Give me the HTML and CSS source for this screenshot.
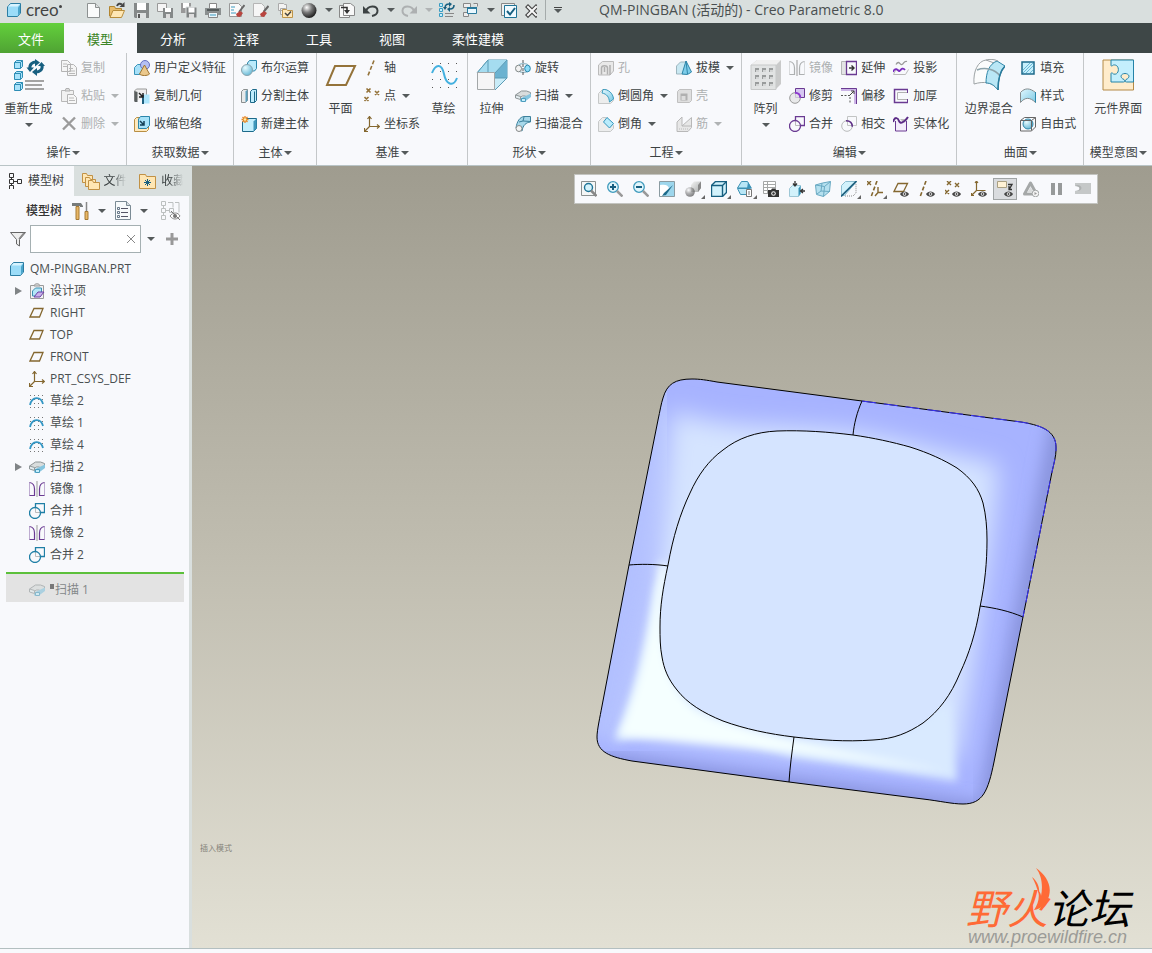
FILE: index.html
```
<!DOCTYPE html>
<html lang="zh-CN">
<head>
    <meta charset="utf-8">
    <title>QM-PINGBAN (活动的) - Creo Parametric 8.0</title>
    <link rel="stylesheet" href="styles.css">
</head>
<body>
    <!-- 图标 -->
    <svg class="sprite" aria-hidden="true">
        <defs>
            <linearGradient id="g-blue" x1="0" y1="0" x2="1" y2="1"><stop offset="0" stop-color="#e2f8ff"/><stop offset="1" stop-color="#7cc9e4"/></linearGradient>
            <linearGradient id="g-gray" x1="0" y1="0" x2="1" y2="1"><stop offset="0" stop-color="#f4f4f4"/><stop offset="1" stop-color="#a9acac"/></linearGradient>
            <radialGradient id="g-ball" cx=".35" cy=".3" r=".7"><stop offset="0" stop-color="#fff"/><stop offset=".5" stop-color="#777"/><stop offset="1" stop-color="#222"/></radialGradient>
            <radialGradient id="g-bball" cx=".35" cy=".3" r=".8"><stop offset="0" stop-color="#e8fbff"/><stop offset="1" stop-color="#5bb3d3"/></radialGradient>
        </defs>
        <symbol id="i-cube" viewBox="0 0 16 16"><path d="M1.500 5l3-3.500h10v9.500l-3 3.500h-10z" fill="#9bdcf8" stroke="#2c7da3"/><path d="M2 4.500l3-2.500h9l-2.500 2.500z" fill="#d8f4ff"/><path d="M12 5.500l2-2.500v8l-2 2.500z" fill="#4aa5cb"/></symbol>
        <symbol id="i-new" viewBox="0 0 16 16"><path d="M2.500 1.500h8l4 4v10h-12z" fill="#fafbfb" stroke="#8d9191"/><path d="M10.500 1.500v4h4" fill="#dde0e0" stroke="#8d9191"/></symbol>
        <symbol id="i-open" viewBox="0 0 16 16"><path d="M.5 14V4.500h5l1 2h6V14z" fill="#e7bb6b" stroke="#b2852f"/><path d="M1 15.500l3-7h11.500l-3 7z" fill="#ffe7b5" stroke="#b88d3c"/><path d="M8 4c1-2.500 3-3 5-1.500" fill="none" stroke="#444" stroke-width="2"/><path d="M15.500 0v5h-5z" fill="#444"/></symbol>
        <symbol id="i-save" viewBox="0 0 16 16"><path d="M1 1h15v15H2l-1-1z" fill="#858989"/><path d="M4 1h9v7H4z" fill="#fff"/><path d="M4 11h9v5H4z" fill="#dfe2e2"/><path d="M5 12h2v4H5z" fill="#555"/></symbol>
        <symbol id="i-saveas" viewBox="0 0 16 16"><path d="M.5 1.500h9v8h-9z" fill="#f5f5f5" stroke="#999"/><path d="M6 6h10v10H6z" fill="#858989"/><path d="M8 6h6v4H8z" fill="#fff"/><path d="M9 12h4v4H9z" fill="#ddd"/></symbol>
        <symbol id="i-savecopy" viewBox="0 0 16 16"><path d="M0 1h10v10H0z" fill="#999"/><path d="M2 1h6v5H2z" fill="#fff"/><path d="M5 5h11v11H5z" fill="#808484" stroke="#dce0e0"/><path d="M7.500 5.500h6v5h-6z" fill="#fff"/><path d="M8 12h5v4H8z" fill="#ddd"/></symbol>
        <symbol id="i-print" viewBox="0 0 16 16"><path d="M4.500 1.500h7v6h-7z" fill="#fff" stroke="#888"/><path d="M0 6h16v7H0z" fill="#8b9090"/><path d="M2 7h12v2H2z" fill="#555b5b"/><path d="M3.500 10.500h9v5h-9z" fill="#eaf6fb" stroke="#888"/><path d="M5 13h6" stroke="#3d9bc0"/></symbol>
        <symbol id="i-docpen" viewBox="0 0 16 16"><path d="M.5 1.500h9l3 3v10h-12z" fill="#fafafa" stroke="#999"/><path d="M2 5h4M2 8h3M2 11h5" stroke="#3d9bc0"/><path d="M15.500 3L10 10" stroke="#666" stroke-width="2"/><path d="M11 9l-4 3 1 2.500 3 .5 3-4z" fill="#b8453f"/></symbol>
        <symbol id="i-docerase" viewBox="0 0 16 16"><path d="M.5 1.500h8l3 3v10h-11z" fill="#f6f6f6" stroke="#b5b5b5"/><path d="M15.500 4l-5 6" stroke="#666" stroke-width="2"/><path d="M11 9l-4 3 1 2.500 3 .5 3-4z" fill="#b8453f"/></symbol>
        <symbol id="i-docfolder" viewBox="0 0 16 16"><path d="M1.500 1.500h5l1 1h2v6h-8zM3.500 6.500h5v6h-5z" fill="#f3f3f3" stroke="#aaa"/><path d="M5.500 15.500v-8h4l1 1h5v7z" fill="#ffe8b9" stroke="#bd944a"/><path d="M8 11l2.500 2.500L14 9.500" fill="none" stroke="#444" stroke-width="1.500"/></symbol>
        <symbol id="i-sphere" viewBox="0 0 16 16"><circle cx="8" cy="8.500" r="7.500" fill="url(#g-ball)"/></symbol>
        <symbol id="i-docin" viewBox="0 0 16 16"><path d="M.5 3.500h10v12H.500z" fill="#f8f8f8" stroke="#888"/><path d="M4.500 1.500h7l4 3v9h-11z" fill="#f8f8f8" stroke="#888"/><path d="M2 5.500h6v3" fill="none" stroke="#333" stroke-width="1.600"/><path d="M5 8h6l-3 4z" fill="#333"/></symbol>
        <symbol id="i-undo" viewBox="0 0 16 16"><path d="M3 9c2-6 11-6 11.500-.5.300 3-2.500 5-5.500 5.500" fill="none" stroke="currentColor" stroke-width="2"/><path d="M0 4v7.500h7.500z" fill="currentColor"/></symbol>
        <symbol id="i-regen" viewBox="0 0 16 16"><path d="M.5 1.500h3v3h-3zM.5 6.500h3v3h-3zM.5 11.500h3v3h-3z" fill="#c5eefc" stroke="#3a9cc2"/><path d="M6 11.500h9M6 14.500h8" stroke="#888"/><path d="M6 6c0-4 3-4 4-4M15 3c0 4-3 4-4 4" fill="none" stroke="#175f80" stroke-width="1.600"/><path d="M10 0l3 2-3 3zM11 5v5L8 7zM4 5h4L6 8z" fill="#175f80"/></symbol>
        <symbol id="i-windows" viewBox="0 0 16 16"><path d="M.5 1.500h7v4h-7zM.5 10.500h5v4h-5zM10.500 1.500h4v3" fill="#eee" stroke="#888"/><path d="M4.500 5.500h9v6h-9z" fill="#e9f8ff" stroke="#2a7a9c"/><path d="M4 5h10v2H4z" fill="#2a7a9c"/></symbol>
        <symbol id="i-checkwin" viewBox="0 0 16 16"><path d="M.5 1.500h13v12H.500z" fill="#eef0f0" stroke="#888"/><path d="M3.500 3.500h12v12h-12z" fill="#f0faff" stroke="#1f7396"/><path d="M6 9l3 3.500L14 6" fill="none" stroke="#175f80" stroke-width="2"/></symbol>
        <symbol id="i-close" viewBox="0 0 12 16"><path d="M3 5l8 8M11 5l-8 8" stroke="#444" stroke-width="4.400" stroke-linecap="square"/><path d="M3 5l8 8M11 5l-8 8" stroke="#f8f9f9" stroke-width="2" stroke-linecap="square"/></symbol>

        <symbol id="i-regen-big" viewBox="0 0 32 32"><g stroke="#2d8db5"><path d="M1.500 3.500l2-2h6v6l-2 2h-6zM1.500 14.500l2-2h6v6l-2 2h-6zM1.500 25.500l2-2h6v6l-2 2h-6z" fill="#a9e3fb"/><path d="M1.500 3.500h6v6M1.500 14.500h6v6M1.500 25.500h6v6M7.500 3.500l2-2M7.500 14.500l2-2M7.500 25.500l2-2" fill="none"/></g><path d="M12 22h19M12 26h17M12 30h19" stroke="#a3a3a3" stroke-width="2"/><path d="M17 10c-1-5 3-7 6-7M29 6c1 5-3 7-6 7" fill="none" stroke="#175f80" stroke-width="3"/><path d="M22 0l5 3.500-5 4zM24 9v8l-5-4zM13.500 8.500H21L17 13zM25 7h7l-3.500-4z" fill="#175f80"/></symbol>
        <symbol id="i-copy" viewBox="0 0 16 16"><path d="M.5.500h6l3 3v8h-9zM6.500 4.500h6l3 3v8h-9z" fill="#f5f5f5" stroke="#b4b4b4"/><path d="M2 4h4M2 6.500h4M8 8.500h4M8 11h6M8 13.500h6" stroke="#b9b9b9"/></symbol>
        <symbol id="i-paste" viewBox="0 0 16 16"><path d="M.5 2.500h12v11H.500z" fill="#f1f1f1" stroke="#b8b8b8"/><path d="M4 3l1-2.500h3L9 3z" fill="#ddd" stroke="#b0b0b0"/><path d="M6.500 6.500h6l3 3v6h-9z" fill="#f7f7f7" stroke="#b4b4b4"/><path d="M8 10h5M8 12.500h6" stroke="#b9b9b9"/></symbol>
        <symbol id="i-delete" viewBox="0 0 16 16"><path d="M2 1.500l12 12M14 1.500l-12 12" stroke="#9b9b9b" stroke-width="2.400"/></symbol>
        <symbol id="i-udf" viewBox="0 0 16 16"><path d="M.5 7.500l3-3h6v7l-2 3h-7z" fill="#a6e0f8" stroke="#3a94ba"/><circle cx="11" cy="5" r="4.500" fill="#b5bff2" stroke="#6670c0"/><path d="M10.500 5l5 9c-2 2-8 2-10 0z" fill="#ebc88c" stroke="#9d7431"/></symbol>
        <symbol id="i-copygeo" viewBox="0 0 16 16"><path d="M.5 13V3l2-2h10v8" fill="#ececec" stroke="#999"/><path d="M.5 3v11h3V4z" fill="#5a5f5f"/><path d="M8.500 6.500h7v9h-7z" fill="#aee6fc"/><path d="M8 7h2v9H8z" fill="#1d5f7e"/><path d="M5 5l4 4M9 5v4H5" fill="none" stroke="#222" stroke-width="1.500"/></symbol>
        <symbol id="i-shrink" viewBox="0 0 16 16"><path d="M.5 3.500l2-2h12v12l-2 2H.500z" fill="#ffe9bd" stroke="#b98f43"/><path d="M4.500 3l2-2.500h9v9l-3 3h-8z" fill="#a7e2f8" stroke="#2b86ab"/><path d="M6 5l4 4M10 5v4H6" fill="none" stroke="#123f55" stroke-width="1.500"/></symbol>
        <symbol id="i-bool" viewBox="0 0 16 16"><path d="M6.500 3l2-2.500h7v8l-2 2.500h-7z" fill="#baeafb" stroke="#2b86ab"/><circle cx="6" cy="10" r="5.500" fill="url(#g-bball)" stroke="#8aa3ad"/></symbol>
        <symbol id="i-split" viewBox="0 0 16 16"><path d="M.5 3.500l2-2h4v11l-2 2h-4z" fill="#e8eaea" stroke="#8b8f8f"/><path d="M4.500 3.500l2-2v11l-2 2z" fill="#5c9fbd"/><path d="M9.500 3.500l2-2h4v11l-2 2h-4z" fill="#bfecfc" stroke="#1d6a8a"/><path d="M13.500 3.500v11" stroke="#1d6a8a"/></symbol>
        <symbol id="i-newbody" viewBox="0 0 16 16"><path d="M1.500 5.500l3-3h11v10l-3 3h-11z" fill="#c3effd" stroke="#1d6a8a"/><path d="M12.500 5.500l3-3v10l-3 3z" fill="#3f97bb"/><path d="M4 0v7M.5 3.500h7M1.500 1l5 5M6.500 1l-5 5" stroke="#e88624" stroke-width="1.300"/><circle cx="4" cy="3.500" r="1.300" fill="#fff2a5"/></symbol>
        <symbol id="i-plane-big" viewBox="0 0 32 32"><path d="M10 7h20l-9 19H2z" fill="none" stroke="#94733a" stroke-width="2"/></symbol>
        <symbol id="i-axis" viewBox="0 0 16 16"><path d="M10 .5L4 15.500" stroke="#94733a" stroke-width="1.600" stroke-dasharray="4 2"/></symbol>
        <symbol id="i-points" viewBox="0 0 16 16"><path d="M2.500.500l4 4M6.500.500l-4 4M11 3l4 4M15 3l-4 4M.5 9l4 4M4.500 9l-4 4" stroke="#94733a" stroke-width="1.600"/></symbol>
        <symbol id="i-csys" viewBox="0 0 16 16"><path d="M5.500 11V1M5.500 10.500H15M5.500 10.500L1 15M3.500 3l2-2.500 2 2.500M13 8.500l2.500 2-2.500 2M.5 12v3.500H4" fill="none" stroke="#84672f" stroke-width="1.200"/></symbol>
        <symbol id="i-sketch-big" viewBox="0 0 32 32"><g stroke="#555" stroke-dasharray="1 7"><path d="M4 4.500h26M4 12.500h26M4 20.500h26M4 28.500h26"/></g><path d="M4 14C8 4 14 5 16 15s9 14 13 4" fill="none" stroke="#43b0df" stroke-width="2"/></symbol>
        <symbol id="i-extrude-big" viewBox="0 0 32 32"><path d="M1 14L12 1h19v18L19 31" fill="#c9ecf8" stroke="#5b9bb5"/><path d="M12 1h19L19 14H1z" fill="#a5dcf0"/><path d="M31 1v18H19z" fill="#5fadd0"/><path d="M19 14L31 1v18H19z" fill="#6bb2d0"/><path d="M12 1v12M19 19h12M12 1L1 14M31 1L19 14" fill="none" stroke="#5b9bb5"/><path d="M1.500 13.500h17v17h-17z" fill="#f5f5f6" stroke="#a3a7a8"/></symbol>
        <symbol id="i-revolve" viewBox="0 0 16 16"><path d="M4 5c2-2 7-2 9 0M4 11c2 2 7 2 9 0" fill="none" stroke="#9fc0cd" stroke-width="1.500"/><path d="M8 0v16" stroke="#555" stroke-dasharray="3 1"/><ellipse cx="3.500" cy="8.500" rx="3" ry="3.300" fill="#f1f1f1" stroke="#7f8686"/><ellipse cx="12.500" cy="8.500" rx="2.800" ry="3.300" fill="#8edcf8" stroke="#2385ac"/></symbol>
        <symbol id="i-sweep" viewBox="0 0 16 16"><path d="M.5 7l6-4h5l4 1.500v4l-5 1V8h-3l-3 2-4-1z" fill="#d9dddd" stroke="#8c9496"/><path d="M5 10.500l11-5v3.500l-6 4.500H5z" fill="#86c5df"/><path d="M.5 7l5 1.500v3l-5-1.500z" fill="#e4edf0" stroke="#8f9799"/><path d="M6.500 10.500h4v3h-4z" fill="#c6eefb" stroke="#4c9dbe"/></symbol>
        <symbol id="i-sweepblend" viewBox="0 0 16 16"><path d="M1 12C2 5 5 1 9 .5h6.500V6C11 6.500 8 9 7 15z" fill="#a7d8ea" stroke="#3d819c"/><path d="M9 1L8 5l7.500.5M4 6l4-1" stroke="#3d819c" fill="none"/><circle cx="4" cy="12.500" r="3" fill="#f3f3f3" stroke="#858989"/></symbol>
        <symbol id="i-hole" viewBox="0 0 16 16"><path d="M.5 5l4-3.500h11v9.500L12 15H.500z" fill="#e9e9e9" stroke="#bbb"/><path d="M3.500 14.500V8c0-3 6-3 6 0v6.500M6.500 12V7M12 5v10" fill="none" stroke="#b0b0b0" stroke-width="1.500"/></symbol>
        <symbol id="i-round" viewBox="0 0 16 16"><path d="M.5 5.500l4-4h4l7 8v3l-3 3H.500z" fill="#eceded" stroke="#c6c8c8"/><path d="M5 1.500C10 1 15 5 15.500 11l-4 3C11 9 9 6 4 5z" fill="url(#g-blue)" stroke="#3c9dc0"/></symbol>
        <symbol id="i-chamfer" viewBox="0 0 16 16"><path d="M.5 5.500l4-4h4l7 8v3l-3 3H.500z" fill="#eceded" stroke="#c6c8c8"/><path d="M5.500 6l3.500-4.500 6.500 6-4 4.500z" fill="#b9ecfc" stroke="#3496bd"/></symbol>
        <symbol id="i-draft" viewBox="0 0 16 16"><path d="M.5 6l4-4h6v12H.500z" fill="#c9e8f2" stroke="#9db6bf"/><path d="M6 14L10 1l5.500 11-4 2.500z" fill="#7dcdea" stroke="#2e86a9"/><path d="M10 1l1.500 13" stroke="#2e86a9"/></symbol>
        <symbol id="i-shell" viewBox="0 0 16 16"><path d="M1.500 3.500l2-2h12v11l-2 2h-12z" fill="#dfdfdf" stroke="#c0c0c0"/><path d="M4.500 5.500h7v7h-7z" fill="#b0b0b0"/><path d="M5.500 8h4v4h-4z" fill="#ddd"/></symbol>
        <symbol id="i-rib" viewBox="0 0 16 16"><path d="M1 6v9.500h11l3.500-4V1.500L6 10V1L1 6zM6 10h9.500" fill="#e7e7e7" stroke="#b8b8b8"/><path d="M3 13h10" stroke="#bbb" stroke-dasharray="1 1"/></symbol>
        <symbol id="i-pattern-big" viewBox="0 0 32 32"><path d="M1 6l6-5h24v24l-6 6H1z" fill="#c9caca"/><path d="M7 1h24l-5 5H1z" fill="#f0f0f0"/><path d="M1 6h25v24.500H1z" fill="#e1e3e3" stroke="#c7c9c9"/><path d="M5 9h4v4H5zM12 9h4v4h-4zM19 9h4v4h-4zM5 16h4v4H5zM12 16h4v4h-4zM19 16h4v4h-4zM5 23h4v4H5zM12 23h4v4h-4zM19 23h4v4h-4z" fill="#999c9c"/><path d="M6 11h3v2H6zM13 11h3v2h-3zM20 11h3v2h-3zM6 18h3v2H6zM13 18h3v2h-3zM20 18h3v2h-3zM6 25h3v2H6zM13 25h3v2h-3zM20 25h3v2h-3z" fill="#d3d5d5"/></symbol>
        <symbol id="i-mirror" viewBox="0 0 16 16"><path d="M.5 1.500C4 2 5.500 4 5.500 8v6.500h-5M15.500 1.500C12 2 10.500 4 10.500 8v6.500h5" fill="none" stroke="currentColor" stroke-width="1.200"/><path d="M.5 1.500v13M15.500 1.500v13" stroke="currentColor" opacity=".4"/><path d="M8 0v16" stroke="#999"/></symbol>
        <symbol id="i-trim" viewBox="0 0 16 16"><path d="M6.500.500h9v9h-9z" fill="#d6c6f1" stroke="#6a3a92"/><circle cx="6" cy="10" r="5.300" fill="#e3e5e5" fill-opacity=".8" stroke="#999"/><path d="M6 4.700c3 0 5.300 2 5.300 5" fill="none" stroke="#8d3bd0" stroke-width="2"/></symbol>
        <symbol id="i-merge" viewBox="0 0 16 16"><path d="M6.500 4V.5h9v9H11" fill="none" stroke="currentColor" stroke-width="1.300"/><path d="M6.500 5v4.500H11" fill="none" stroke="#bbb"/><circle cx="6" cy="10" r="5.500" fill="none" stroke="currentColor" stroke-width="1.300"/></symbol>
        <symbol id="i-extend" viewBox="0 0 16 16"><path d="M.5 1.500h5v13h-5z" fill="#e3e5e5" stroke="#b5b7b7"/><path d="M5.500 1.500h10v13h-10z" fill="none" stroke="#6a3a92" stroke-width="1.300"/><path d="M8 8h5M10.500 5.500L13 8l-2.500 2.500" fill="none" stroke="#333" stroke-width="1.400"/></symbol>
        <symbol id="i-offset" viewBox="0 0 16 16"><path d="M0 0h16v16h-3V3H0z" fill="#cbb4e6"/><path d="M0 .5h15.500V16" fill="none" stroke="#6a3a92"/><path d="M0 7.500h9V16" fill="none" stroke="#555" stroke-dasharray="2 1.500"/><path d="M9 7l4-4M10 3h3v3" fill="none" stroke="#444"/></symbol>
        <symbol id="i-intersect" viewBox="0 0 16 16"><path d="M6.500.500h9v9h-9z" fill="none" stroke="#c2c4c4"/><circle cx="6" cy="10" r="5.300" fill="none" stroke="#b9bbbb"/><path d="M5 4.700c4 0 6.300 2 6.300 6" fill="none" stroke="#5b2a86" stroke-width="1.500"/></symbol>
        <symbol id="i-project" viewBox="0 0 16 16"><path d="M3 4.500c3-5 4 1 6 0s2-4 5-3" fill="none" stroke="#999" stroke-width="1.300"/><path d="M3 9.500L.5 14.500h12l3-5" fill="none" stroke="#bbb"/><path d="M0 12c2-5 5-2 6-1s3-5 6-1" fill="none" stroke="#7b2fbe" stroke-width="1.800"/></symbol>
        <symbol id="i-thicken" viewBox="0 0 16 16"><path d="M15 1.500H1.500v13H15" fill="none" stroke="#6a3a92" stroke-width="1.500"/><path d="M15 4.500H4.500v7H15" fill="none" stroke="#b2b2b2"/><path d="M14.500 1v4M14.500 11v4" stroke="#6a3a92"/></symbol>
        <symbol id="i-solidify" viewBox="0 0 16 16"><path d="M2.500 5v10h11V5" fill="#f3edfa" stroke="#6a3a92"/><path d="M7 3h8l-4 4z" fill="#bbb"/><path d="M0 6c2-6 5-4 6-1s5 2 9-4" fill="none" stroke="#5b2a86" stroke-width="2"/></symbol>
        <symbol id="i-boundary-big" viewBox="0 0 32 32"><path d="M1 25C0 12 5 2 13 1l19 7c-5 5-7 14-7 23-6-8-14-9-24-6z" fill="#fbfcfc" stroke="#9da3a5"/><path d="M24 2l8 5c-5 5-7 14-7 24-4-5-7-7-12-7 0-10 3-19 11-22z" fill="#b9e7f6" stroke="#2f86a8"/><path d="M4 11c8-3 18-1 23 6" fill="none" stroke="#8ca3ab" stroke-width="1.500"/><path d="M13 1c4-1 8-1 12 1" fill="none" stroke="#9da3a5"/><path d="M32 7c-5 5-7 14-7 24" fill="none" stroke="#287c9e" stroke-width="1.500"/></symbol>
        <symbol id="i-fill" viewBox="0 0 16 16"><path d="M2 2h12v12H2z" fill="#c6effc" stroke="#1d6a8a" stroke-width="1.500"/><path d="M3 10l7-7M3 13L13 3M6 13l7-7M10 13l3-3" stroke="#6db9d6"/></symbol>
        <symbol id="i-style" viewBox="0 0 16 16"><path d="M.5 4.500C5-.5 10 0 15.500 4.500v10C10 9 5 9 .5 14.500z" fill="url(#g-blue)" stroke="#858c8e"/><path d="M15.500 4v10.500" stroke="#2a86aa"/></symbol>
        <symbol id="i-freestyle" viewBox="0 0 16 16"><circle cx="8" cy="8" r="5" fill="url(#g-bball)" stroke="#2f86a8"/><path d="M.5 4.500l4-3h11v9.500l-4 4H.500zM.5 4.500h11v10M11.500 4.500l4-3" fill="none" stroke="#666"/></symbol>
        <symbol id="i-component-big" viewBox="0 0 32 32"><path d="M1 1h30.500v30H1z" fill="#ffeccb" stroke="#b48a46"/><path d="M9 1h22.500v22h-7c-2 0-1-1.500-.5-2.500 5-2 3-6-1-6s-6 4-1 6c.5 1 1.500 2.500-.5 2.500H9v-8c0-2 1.500-1 2.500 0 6 2 7-10 0-9-1 .5-2.500 2-2.500 0z" fill="#c4effd" stroke="#2583a8"/></symbol>

        <symbol id="i-tree" viewBox="0 0 16 16"><path d="M2.500.500h4v4h-4zM2.500 6.500h4v4h-4zM2.500 12.500h4v4h-4zM10.500 6.500h4v4h-4z" fill="none" stroke="#333"/><path d="M4.500 4.500v2M4.500 10.500v2M6.500 8.500h4" stroke="#333"/></symbol>
        <symbol id="i-folders" viewBox="0 0 20 20"><g fill="#ffe6b3" stroke="#c19145"><path d="M1.500 11.500v-9h4l1 2h5v7z"/><path d="M4.500 15.500v-9h4l1 2h5v7z"/><path d="M7.500 18.500v-9h4l1 2h6v7z"/></g></symbol>
        <symbol id="i-favor" viewBox="0 0 20 20"><path d="M1.500 17.500v-14h6l1 2h9v12z" fill="#ffe6b3" stroke="#c19145"/><path d="M9.500 8v7M6 11.500h7M7 9l5 5M12 9l-5 5" stroke="#175f80"/></symbol>
        <symbol id="i-hammer" viewBox="0 0 20 20"><path d="M1 2h9l2 3v1H9V5H1z" fill="#777b7b"/><path d="M5 5.500h3v13H5z" fill="#e9b766" stroke="#a57a35"/><path d="M15.500 1v9" stroke="#888" stroke-width="1.500"/><path d="M14 10.500h3v8h-3z" fill="#e9b766" stroke="#a57a35"/></symbol>
        <symbol id="i-list" viewBox="0 0 20 20"><path d="M2.500.500h11l4 4v14h-15z" fill="#f7fafb" stroke="#7b8b95"/><path d="M13.500.500v4h4" fill="#d7dde0" stroke="#7b8b95"/><path d="M8 7.500h7M8 11.500h7M8 15.500h7" stroke="#556"/><path d="M4.500 6.500h2v2h-2zM4.500 10.500h2v2h-2zM4.500 14.500h2v2h-2z" fill="none" stroke="#678"/></symbol>
        <symbol id="i-treehide" viewBox="0 0 20 20"><path d="M.5.500h4v4h-4zM.5 7.500h4v4h-4zM.5 14.500h4v4h-4zM8.500 7.500h4v4h-4zM2.500 4v3M2.500 11v3M4.500 9.500h4M7 1.500h5v5M14 1.500h4v10" fill="none" stroke="#bcc0c0"/><path d="M9 15c3-4 8-4 10 0-3 4-7 4-10 0z" fill="#fff" stroke="#888"/><circle cx="14" cy="15" r="2" fill="#777"/><path d="M10 10l9 9" stroke="#777"/></symbol>
        <symbol id="i-filter" viewBox="0 0 16 16"><path d="M.5 1.500h15l-6 7v6.500l-3-2V8.500z" fill="#eee" stroke="#666"/><path d="M9 8l5-6" stroke="#888" stroke-width="1.500"/></symbol>
        <symbol id="i-design" viewBox="0 0 16 16"><path d="M1.500 2.500h13v13h-13z" fill="#f2f2f4" stroke="#9a9a9a"/><path d="M5 3c0-3 6-3 6 0z" fill="#ddd" stroke="#999"/><path d="M3.500 8l3-3h6v5l-3 3h-6z" fill="#b4e6f7" stroke="#3c91b3"/><path d="M5 14l4-5h6l-4 5z" fill="#c8b2ea" stroke="#6b3fa5"/></symbol>
        <symbol id="i-datum" viewBox="0 0 16 16"><path d="M5 3.500h9L10.500 12H1z" fill="none" stroke="#84672f" stroke-width="1.300"/></symbol>
        <symbol id="i-sketch" viewBox="0 0 16 16"><path d="M1 2.500h14M1 6.500h14M1 10.500h14M1 14.500h14" stroke="#777" stroke-dasharray="1 3"/><path d="M1 12C3 3 12 3 14 11" fill="none" stroke="#3296c4" stroke-width="1.800"/></symbol>

        <symbol id="i-fit" viewBox="0 0 16 16"><path d="M.5.500h14v14H.500z" fill="#f4f6f6" stroke="#8c9191"/><circle cx="7.500" cy="6.500" r="4" fill="#d5f2fb" stroke="#1f7396" stroke-width="1.400"/><path d="M10 9.500l5.500 5.500" stroke="#888" stroke-width="2.500"/></symbol>
        <symbol id="i-zoomin" viewBox="0 0 16 16"><circle cx="6" cy="6" r="5.300" fill="#e2f6fc" stroke="#3f9bbd" stroke-width="1.300"/><path d="M10 10l5.500 5.500" stroke="#999" stroke-width="2.500"/><path d="M3 6h6M6 3v6" stroke="#175f80" stroke-width="2"/></symbol>
        <symbol id="i-zoomout" viewBox="0 0 16 16"><circle cx="6" cy="6" r="5.300" fill="#e2f6fc" stroke="#3f9bbd" stroke-width="1.300"/><path d="M10 10l5.500 5.500" stroke="#999" stroke-width="2.500"/><path d="M3 6h6" stroke="#175f80" stroke-width="2"/></symbol>
        <symbol id="i-repaint" viewBox="0 0 16 16"><path d="M.5.500h15v15H.500z" fill="#9dd6ec" stroke="#8b9ba1"/><path d="M1 4c5-1 8 0 9 3l-5 8H1z" fill="#fff"/><path d="M14 4l-9 8-2 3 4-1z" fill="#1d6a8a"/></symbol>
        <symbol id="i-shading" viewBox="0 0 16 16"><path d="M6 4l3-3.500h7V7l-3 4H6z" fill="url(#g-gray)"/><path d="M13 4v7l3-4V.5z" fill="#888"/><circle cx="5" cy="11" r="4.800" fill="url(#g-ball)" opacity=".55"/></symbol>
        <symbol id="i-display" viewBox="0 0 16 16"><path d="M.5 4.500l4-4h11v11l-4 4H.500z" fill="#d2f2fc" stroke="#175f80" stroke-width="1.400"/><path d="M.5 4.500h11v11M11.500 4.500l4-4" fill="none" stroke="#175f80" stroke-width="1.400"/></symbol>
        <symbol id="i-orient" viewBox="0 0 16 16"><path d="M.5 7L4.500.5h6L14 7zM.5 7.500h12l-3 6h-6z" fill="#b8e6f6" stroke="#3c91b3"/><path d="M11 1l4 6.500h-5z" fill="#3b93b8"/><path d="M9.500 8.500h5v7h-5z" fill="#fff" stroke="#777"/><path d="M11 11h2M11 13h2" stroke="#777"/></symbol>
        <symbol id="i-camera" viewBox="0 0 16 16"><path d="M.5.500h12v12H.500zM.5 3.500h12M.5 6.500h12M.5 9.500h12M4.500.500v12" fill="#fff" stroke="#a5a7a7"/><path d="M5 9h3l1-1.500h3L13 9h3v7H5z" fill="#333"/><circle cx="10.500" cy="12.500" r="2.300" fill="#eee"/><circle cx="10.500" cy="12.500" r="1.200" fill="#333"/></symbol>
        <symbol id="i-normal" viewBox="0 0 16 16"><path d="M.5 7.500l3-3h8v8l-2 3h-9z" fill="#d2f2fc" stroke="#9ec7d6"/><path d="M9.500 7.500l2-3v8l-2 3z" fill="#3694ba"/><path d="M6 0v4M4 2.500l2 2.500 2-2.500M16 10h-4M14 8l-2.500 2 2.500 2" fill="none" stroke="#333" stroke-width="1.300"/></symbol>
        <symbol id="i-persp" viewBox="0 0 16 16"><path d="M.5 4l7-2 8-1.500-1 10-6 5-7-2z" fill="#b5e0ef" stroke="#69a9c2"/><path d="M.5 4l9 1.500 6-5M9.500 5.500l-1 10M7 2L6 10l9 .5M6 10l-4 3" fill="none" stroke="#69a9c2"/></symbol>
        <symbol id="i-section" viewBox="0 0 16 16"><path d="M.5 4.500l4-4h11l-12 14h-3z" fill="#d2f2fc" stroke="#8cbdd0"/><path d="M4 15h8l3-3V3" fill="none" stroke="#888" stroke-dasharray="1 1"/><path d="M0 15.500L15.500 0" stroke="#1d5f7e" stroke-width="1.600"/></symbol>
        <symbol id="i-datums" viewBox="0 0 16 16"><path d="M0 0l4 4M4 0L0 4M11 6v6M8 15l3-3.500h5" stroke="#84672f" stroke-width="1.400" fill="none"/><path d="M10 0L4 16" stroke="#84672f" stroke-width="1.600" stroke-dasharray="4 2"/></symbol>
        <symbol id="i-eye" viewBox="0 0 16 16"><path d="M7 13c2-3.500 7-3.500 9 0-2 3.500-7 3.500-9 0z" fill="#444"/><circle cx="11.500" cy="13" r="1.800" fill="#fff"/><circle cx="11.500" cy="13" r="1" fill="#444"/></symbol>
        <symbol id="i-planeshow" viewBox="0 0 16 16"><path d="M5 2.500h9.500l-4 8H1z" fill="none" stroke="#84672f" stroke-width="1.300"/><use href="#i-eye"/></symbol>
        <symbol id="i-axisshow" viewBox="0 0 16 16"><path d="M7 0L1 16" stroke="#84672f" stroke-width="1.600" stroke-dasharray="4 2"/><use href="#i-eye"/></symbol>
        <symbol id="i-pointshow" viewBox="0 0 16 16"><path d="M2 0l4 4M6 0L2 4M10 2l4 4M14 2l-4 4M0 9l4 4M4 9l-4 4" stroke="#84672f" stroke-width="1.400"/><use href="#i-eye"/></symbol>
        <symbol id="i-csysshow" viewBox="0 0 16 16"><path d="M5.500 10V0M5.500 9.500h9M5.500 9.500L1 14M4 2l1.500-2L7 2M.5 12v2.500H3" fill="none" stroke="#84672f" stroke-width="1.200"/><use href="#i-eye"/></symbol>
        <symbol id="i-annoshow" viewBox="0 0 16 16"><path d="M.5.500h9v6h-9z" fill="#fff2d6" stroke="#aaa083"/><path d="M11 3.500h4L12.500 8M12 5v3.500h3" fill="none" stroke="#333" stroke-width="1.300"/><use href="#i-eye"/></symbol>
        <symbol id="i-sim" viewBox="0 0 16 16"><path d="M7.500 2l6 11H1.500z" fill="none" stroke="#a5a8a8" stroke-width="3" stroke-linejoin="round"/><path d="M7.500 6l3.500 6H4z" fill="#d9dbdb"/><circle cx="12.500" cy="12.500" r="3.300" fill="#f4f4f4" stroke="#a5a8a8"/><path d="M11.500 11v3l2.500-1.500z" fill="#999"/></symbol>
        <symbol id="i-pause" viewBox="0 0 16 16"><path d="M2 2h4v12H2zM9 2h4v12H9z" fill="#979a9a"/></symbol>
        <symbol id="i-result" viewBox="0 0 16 16"><path d="M0 2h16v11H0v-3c6 0 6-5 0-5z" fill="#c5c8c8"/><path d="M0 5c6 0 6 5 0 5h2c6 0 6-6 0-6z" fill="#aeb1b1"/></symbol>
    </svg>

    <!-- 快速访问工具栏 -->
    <header class="titlebar">
        <svg class="icon"><use href="#i-cube"/></svg>
        <span class="brand">creo<i></i></span>
        <div class="quick">
            <button aria-label="新建"><svg class="icon"><use href="#i-new"/></svg></button>
            <button aria-label="打开"><svg class="icon"><use href="#i-open"/></svg></button>
            <button aria-label="保存"><svg class="icon"><use href="#i-save"/></svg></button>
            <button aria-label="另存为"><svg class="icon"><use href="#i-saveas"/></svg></button>
            <button aria-label="保存副本"><svg class="icon"><use href="#i-savecopy"/></svg></button>
            <button aria-label="打印"><svg class="icon"><use href="#i-print"/></svg></button>
            <button aria-label="拭除当前"><svg class="icon"><use href="#i-docpen"/></svg></button>
            <button aria-label="拭除未显示的"><svg class="icon"><use href="#i-docerase"/></svg></button>
            <button aria-label="工作目录"><svg class="icon"><use href="#i-docfolder"/></svg></button>
            <button aria-label="外观"><svg class="icon"><use href="#i-sphere"/></svg></button>
            <button class="drop" aria-label="更多外观"><i class="caret"></i></button>
            <button aria-label="导入"><svg class="icon"><use href="#i-docin"/></svg></button>
            <button aria-label="撤消"><svg class="icon"><use href="#i-undo"/></svg></button>
            <button class="drop" aria-label="撤消列表"><i class="caret"></i></button>
            <button class="off" aria-label="重做"><svg class="icon flip"><use href="#i-undo"/></svg></button>
            <button class="drop off" aria-label="重做列表"><i class="caret"></i></button>
            <button aria-label="重新生成"><svg class="icon"><use href="#i-regen"/></svg></button>
            <button aria-label="窗口"><svg class="icon"><use href="#i-windows"/></svg></button>
            <button class="drop" aria-label="窗口列表"><i class="caret"></i></button>
            <button aria-label="激活"><svg class="icon"><use href="#i-checkwin"/></svg></button>
            <button aria-label="关闭"><svg class="icon narrow"><use href="#i-close"/></svg></button>
            <span class="split"></span>
            <button class="custom" aria-label="自定义"><i class="caret"></i></button>
        </div>
        <h1>QM-PINGBAN (活动的) - Creo Parametric 8.0</h1>
    </header>

    <!-- 选项卡 -->
    <nav class="tabs">
        <a href="#" class="file">文件</a>
        <a href="#" class="active">模型</a>
        <a href="#">分析</a>
        <a href="#">注释</a>
        <a href="#">工具</a>
        <a href="#">视图</a>
        <a href="#">柔性建模</a>
    </nav>

    <!-- 功能区 -->
    <div class="ribbon">
        <section class="group">
            <div class="body">
                <button class="big regen"><svg><use href="#i-regen-big"/></svg>重新生成<i class="caret"></i></button>
                <div class="col">
                    <button class="cmd off"><svg class="icon"><use href="#i-copy"/></svg>复制</button>
                    <button class="cmd off"><svg class="icon"><use href="#i-paste"/></svg>粘贴<i class="caret"></i></button>
                    <button class="cmd off"><svg class="icon"><use href="#i-delete"/></svg>删除<i class="caret"></i></button>
                </div>
            </div>
            <button class="foot">操作<i class="caret"></i></button>
        </section>
        <section class="group">
            <div class="body">
                <div class="col">
                    <button class="cmd"><svg class="icon"><use href="#i-udf"/></svg>用户定义特征</button>
                    <button class="cmd"><svg class="icon"><use href="#i-copygeo"/></svg>复制几何</button>
                    <button class="cmd"><svg class="icon"><use href="#i-shrink"/></svg>收缩包络</button>
                </div>
            </div>
            <button class="foot">获取数据<i class="caret"></i></button>
        </section>
        <section class="group">
            <div class="body">
                <div class="col">
                    <button class="cmd"><svg class="icon"><use href="#i-bool"/></svg>布尔运算</button>
                    <button class="cmd"><svg class="icon"><use href="#i-split"/></svg>分割主体</button>
                    <button class="cmd"><svg class="icon"><use href="#i-newbody"/></svg>新建主体</button>
                </div>
            </div>
            <button class="foot">主体<i class="caret"></i></button>
        </section>
        <section class="group">
            <div class="body">
                <button class="big"><svg><use href="#i-plane-big"/></svg>平面</button>
                <div class="col">
                    <button class="cmd"><svg class="icon"><use href="#i-axis"/></svg>轴</button>
                    <button class="cmd"><svg class="icon"><use href="#i-points"/></svg>点<i class="caret"></i></button>
                    <button class="cmd"><svg class="icon"><use href="#i-csys"/></svg>坐标系</button>
                </div>
                <button class="big"><svg><use href="#i-sketch-big"/></svg>草绘</button>
            </div>
            <button class="foot">基准<i class="caret"></i></button>
        </section>
        <section class="group">
            <div class="body">
                <button class="big"><svg><use href="#i-extrude-big"/></svg>拉伸</button>
                <div class="col">
                    <button class="cmd"><svg class="icon"><use href="#i-revolve"/></svg>旋转</button>
                    <button class="cmd"><svg class="icon"><use href="#i-sweep"/></svg>扫描<i class="caret"></i></button>
                    <button class="cmd"><svg class="icon"><use href="#i-sweepblend"/></svg>扫描混合</button>
                </div>
            </div>
            <button class="foot">形状<i class="caret"></i></button>
        </section>
        <section class="group">
            <div class="body">
                <div class="col">
                    <button class="cmd off"><svg class="icon"><use href="#i-hole"/></svg>孔</button>
                    <button class="cmd"><svg class="icon"><use href="#i-round"/></svg>倒圆角<i class="caret"></i></button>
                    <button class="cmd"><svg class="icon"><use href="#i-chamfer"/></svg>倒角<i class="caret"></i></button>
                </div>
                <div class="col">
                    <button class="cmd"><svg class="icon"><use href="#i-draft"/></svg>拔模<i class="caret"></i></button>
                    <button class="cmd off"><svg class="icon"><use href="#i-shell"/></svg>壳</button>
                    <button class="cmd off"><svg class="icon"><use href="#i-rib"/></svg>筋<i class="caret"></i></button>
                </div>
            </div>
            <button class="foot">工程<i class="caret"></i></button>
        </section>
        <section class="group">
            <div class="body">
                <button class="big"><svg><use href="#i-pattern-big"/></svg>阵列<i class="caret"></i></button>
                <div class="col">
                    <button class="cmd off"><svg class="icon"><use href="#i-mirror"/></svg>镜像</button>
                    <button class="cmd"><svg class="icon"><use href="#i-trim"/></svg>修剪</button>
                    <button class="cmd"><svg class="icon purple"><use href="#i-merge"/></svg>合并</button>
                </div>
                <div class="col">
                    <button class="cmd"><svg class="icon"><use href="#i-extend"/></svg>延伸</button>
                    <button class="cmd"><svg class="icon"><use href="#i-offset"/></svg>偏移</button>
                    <button class="cmd"><svg class="icon"><use href="#i-intersect"/></svg>相交</button>
                </div>
                <div class="col">
                    <button class="cmd"><svg class="icon"><use href="#i-project"/></svg>投影</button>
                    <button class="cmd"><svg class="icon"><use href="#i-thicken"/></svg>加厚</button>
                    <button class="cmd"><svg class="icon"><use href="#i-solidify"/></svg>实体化</button>
                </div>
            </div>
            <button class="foot">编辑<i class="caret"></i></button>
        </section>
        <section class="group">
            <div class="body">
                <button class="big wide"><svg><use href="#i-boundary-big"/></svg>边界混合</button>
                <div class="col">
                    <button class="cmd"><svg class="icon"><use href="#i-fill"/></svg>填充</button>
                    <button class="cmd"><svg class="icon"><use href="#i-style"/></svg>样式</button>
                    <button class="cmd"><svg class="icon"><use href="#i-freestyle"/></svg>自由式</button>
                </div>
            </div>
            <button class="foot">曲面<i class="caret"></i></button>
        </section>
        <section class="group">
            <div class="body">
                <button class="big last"><svg><use href="#i-component-big"/></svg>元件界面</button>
            </div>
            <button class="foot">模型意图<i class="caret"></i></button>
        </section>
    </div>

    <main>
        <!-- 模型树 -->
        <aside class="sidebar">
            <div class="side-tabs">
                <button class="active"><svg class="icon"><use href="#i-tree"/></svg>模型树</button>
                <button><svg class="icon20"><use href="#i-folders"/></svg><span>文件</span></button>
                <button><svg class="icon20"><use href="#i-favor"/></svg><span>收藏</span></button>
            </div>
            <div class="side-tools">
                <h2>模型树</h2>
                <button aria-label="设置"><svg class="icon20"><use href="#i-hammer"/></svg></button>
                <button aria-label="设置菜单"><i class="caret"></i></button>
                <button aria-label="显示"><svg class="icon20"><use href="#i-list"/></svg></button>
                <button aria-label="显示菜单"><i class="caret"></i></button>
                <button aria-label="隐藏树"><svg class="icon20"><use href="#i-treehide"/></svg></button>
            </div>
            <div class="side-search">
                <svg class="icon"><use href="#i-filter"/></svg>
                <div class="search">
                    <input type="text" aria-label="搜索模型树">
                    <button aria-label="清除"><svg viewBox="0 0 8 8"><path d="M0 0l8 8M8 0L0 8" stroke="#888"/></svg></button>
                </div>
                <button aria-label="搜索选项"><i class="caret"></i></button>
                <button aria-label="添加"><svg class="plus" viewBox="0 0 12 12"><path d="M6 0v12M0 6h12" stroke="#999" stroke-width="3"/></svg></button>
            </div>
            <ul class="tree">
                <li class="root"><svg class="icon"><use href="#i-cube"/></svg>QM-PINGBAN.PRT</li>
                <li class="fold"><svg class="icon"><use href="#i-design"/></svg>设计项</li>
                <li><svg class="icon"><use href="#i-datum"/></svg>RIGHT</li>
                <li><svg class="icon"><use href="#i-datum"/></svg>TOP</li>
                <li><svg class="icon"><use href="#i-datum"/></svg>FRONT</li>
                <li><svg class="icon"><use href="#i-csys"/></svg>PRT_CSYS_DEF</li>
                <li><svg class="icon"><use href="#i-sketch"/></svg>草绘 2</li>
                <li><svg class="icon"><use href="#i-sketch"/></svg>草绘 1</li>
                <li><svg class="icon"><use href="#i-sketch"/></svg>草绘 4</li>
                <li class="fold"><svg class="icon"><use href="#i-sweep"/></svg>扫描 2</li>
                <li><svg class="icon purple"><use href="#i-mirror"/></svg>镜像 1</li>
                <li><svg class="icon teal"><use href="#i-merge"/></svg>合并 1</li>
                <li><svg class="icon purple"><use href="#i-mirror"/></svg>镜像 2</li>
                <li><svg class="icon teal"><use href="#i-merge"/></svg>合并 2</li>
                <li class="hidden-item"><svg class="icon"><use href="#i-sweep"/></svg><i></i>扫描 1</li>
            </ul>
        </aside>

        <!-- 图形区 -->
        <div class="viewport">
            <svg class="model" viewBox="192 166 960 782">
                <defs>
                    <clipPath id="outer"><path d="M663 398C667 384 675 379 692 379C700 379 706 380 717 382L862 401L1021 422C1046 426 1057 433 1056 450C1056 456 1054 463 1052 472L1023 617L994 762C988 791 983 804 963 804C952 804 940 801 923 799L789 782L632 761C610 757 597 752 597 737C597 730 600 717 602 706L629 565L658 420C660 411 661 404 663 398Z"/></clipPath>
                    <filter id="blur4" x="-20%" y="-20%" width="140%" height="140%"><feGaussianBlur stdDeviation="4"/></filter>
                    <filter id="blur8" x="-20%" y="-20%" width="140%" height="140%"><feGaussianBlur stdDeviation="8"/></filter>
                    <filter id="blur12" x="-20%" y="-20%" width="140%" height="140%"><feGaussianBlur stdDeviation="12"/></filter>
                </defs>
                <g clip-path="url(#outer)">
                    <path d="M590 370h480v440H590z" fill="#a7b3ff"/>
                    <!-- 左侧亮边 -->
                    <path d="M655 380L597 740" stroke="#b2c0ff" stroke-width="50" filter="url(#blur8)"/>
                    <!-- 右侧和底部暗边 -->
                    <path d="M1062 420L988 815" fill="none" stroke="#8893dc" stroke-width="22" filter="url(#blur8)"/>
                    <path d="M597 762L985 813" fill="none" stroke="#8893dc" stroke-width="20" filter="url(#blur8)"/>
                    <!-- 过渡面 -->
                    <path d="M672 410C720 430 790 424 853 432C900 438 945 454 998 464C996 515 988 560 980 610C974 670 966 710 958 760L794 752L625 730C636 700 644 650 654 590C662 520 666 460 672 410Z" fill="#d5e4ff" filter="url(#blur12)"/>
                    <path d="M700 725L614 741C634 700 646 650 655 590L672 560C655 610 660 690 700 712C760 742 840 746 915 728L950 700L957 781L794 757Z" fill="#d9eaff" filter="url(#blur4)"/>
                    <path d="M618 736C638 690 650 640 660 560L668 570C655 640 664 690 700 712C760 738 850 752 945 771L794 752Z" fill="#f5ffff" filter="url(#blur4)"/>
                </g>
                <path class="face" d="M660 627C660 606 663 588 668 565C673 537 680 514 690 493C698 475 709 460 723 450C738 438 756 432 777 431C803 430 829 432 853 435C874 438 892 442 910 447C929 453 944 460 957 468C971 478 979 489 983 503C986 515 987 528 987 540C987 562 985 583 980 607C976 632 969 654 960 673C951 695 939 711 923 723C908 733 894 739 873 740C845 742 820 740 794 737C769 734 745 729 723 721C703 713 687 703 677 690C668 679 664 669 662 657C660 647 660 637 660 627Z"/>
                <path class="edge" d="M663 398C667 384 675 379 692 379C700 379 706 380 717 382L862 401L1021 422C1046 426 1057 433 1056 450C1056 456 1054 463 1052 472L1023 617L994 762C988 791 983 804 963 804C952 804 940 801 923 799L789 782L632 761C610 757 597 752 597 737C597 730 600 717 602 706L629 565L658 420C660 411 661 404 663 398Z"/>
                <path class="edge" d="M862 401C857 412 854 424 853 435M629 565C640 564 655 564 668 566M980 606C995 608 1009 611 1023 617M794 737C792 752 790 766 789 782"/>
                <path class="picked" d="M862 401L1021 422C1046 426 1057 433 1056 450C1056 456 1054 463 1052 472L1023 617"/>
            </svg>

            <div class="view-tools">
                <button aria-label="重新调整"><svg class="icon"><use href="#i-fit"/></svg></button>
                <button aria-label="放大"><svg class="icon"><use href="#i-zoomin"/></svg></button>
                <button aria-label="缩小"><svg class="icon"><use href="#i-zoomout"/></svg></button>
                <button aria-label="重画"><svg class="icon"><use href="#i-repaint"/></svg></button>
                <button class="more" aria-label="渲染选项"><svg class="icon"><use href="#i-shading"/></svg></button>
                <button class="more" aria-label="显示样式"><svg class="icon"><use href="#i-display"/></svg></button>
                <button class="more" aria-label="已保存方向"><svg class="icon"><use href="#i-orient"/></svg></button>
                <button aria-label="视图管理器"><svg class="icon"><use href="#i-camera"/></svg></button>
                <button aria-label="视图法向"><svg class="icon"><use href="#i-normal"/></svg></button>
                <button aria-label="透视图"><svg class="icon"><use href="#i-persp"/></svg></button>
                <button class="more" aria-label="截面"><svg class="icon"><use href="#i-section"/></svg></button>
                <button class="more" aria-label="基准显示"><svg class="icon"><use href="#i-datums"/></svg></button>
                <button aria-label="平面显示"><svg class="icon"><use href="#i-planeshow"/></svg></button>
                <button aria-label="轴显示"><svg class="icon"><use href="#i-axisshow"/></svg></button>
                <button aria-label="点显示"><svg class="icon"><use href="#i-pointshow"/></svg></button>
                <button aria-label="坐标系显示"><svg class="icon"><use href="#i-csysshow"/></svg></button>
                <button class="on" aria-label="注释显示"><svg class="icon"><use href="#i-annoshow"/></svg></button>
                <button aria-label="仿真"><svg class="icon"><use href="#i-sim"/></svg></button>
                <button aria-label="暂停"><svg class="icon"><use href="#i-pause"/></svg></button>
                <button aria-label="结果"><svg class="icon"><use href="#i-result"/></svg></button>
            </div>

            <p class="mode">插入模式</p>

            <div class="logo">
                <svg class="flame" viewBox="0 0 18 42"><path d="M4 0C14 7 20 17 17 28C15 36 9 41 2 42C6 36 8 30 6 22C8 24 9 26 9 28C11 18 10 8 4 0ZM0 9C6 14 8 20 7 27C5 20 3 14 0 9Z" fill="#ff6a36"/></svg>
                <p class="name"><b>野火</b>论坛</p>
                <p class="site">www.proewildfire.cn</p>
            </div>
        </div>
    </main>
    <footer class="status"></footer>
</body>
</html>
```
FILE: styles.css
```
* {
    box-sizing: border-box;
}
body {
    margin: 0;
    height: 100vh;
    display: flex;
    flex-direction: column;
    overflow: hidden;
    font: 12px/16px "Open Sans", "Noto Sans CJK SC", sans-serif;
    color: #3c4243;
    background: #f8f9fc;
}
h1, h2, p, ul {
    margin: 0;
    padding: 0;
    font-weight: normal;
}
button {
    display: flex;
    align-items: center;
    margin: 0;
    padding: 0;
    border: 0;
    background: none;
    font: inherit;
    color: inherit;
    white-space: nowrap;
}
.sprite {
    position: absolute;
    width: 0;
    height: 0;
}
.icon {
    flex: none;
    width: 16px;
    height: 16px;
    overflow: visible;
}
.icon20 {
    flex: none;
    width: 20px;
    height: 20px;
}
.narrow {
    width: 12px;
}
.flip {
    transform: scaleX(-1);
}
.purple {
    color: #6a3a92;
}
.teal {
    color: #1f7fa6;
}
.caret {
    flex: none;
    border: 4px solid transparent;
    border-top-color: #555a5b;
    border-bottom: 0;
}
.off {
    color: #adb0b1;
}
.off .caret {
    border-top-color: #b0b3b4;
}

/* 标题栏 */
.titlebar {
    flex: none;
    display: flex;
    align-items: center;
    height: 23px;
    padding: 0 6px 4px;
    background: #d9dfde;
}
.brand {
    display: flex;
    width: 59px;
    margin-left: 4px;
    font: 17px/18px Lato, sans-serif;
    color: #444;
}
.brand i {
    width: 3px;
    height: 3px;
    margin-top: 4px;
    border-radius: 2px;
    background: #444;
}
.quick {
    display: flex;
    align-items: center;
    gap: 8px;
}
.quick .drop {
    width: 6px;
}
.split {
    width: 1px;
    height: 20px;
    background: #a5abab;
}
.custom {
    padding-top: 1px;
    border-top: 1px solid #444;
}
.titlebar h1 {
    margin-left: 37px;
    font-size: 14px;
    line-height: 18px;
    color: #4a4f50;
    white-space: nowrap;
}

/* 选项卡 */
.tabs {
    flex: none;
    display: flex;
    height: 30px;
    background: #3e4747;
}
.tabs a {
    padding: 0 24px 0 23px;
    font-size: 13px;
    line-height: 32px;
    color: #fff;
    text-decoration: none;
}
.tabs .file {
    padding: 0 20px 0 18px;
    background: linear-gradient(#63d03c, #4fa333);
}
.tabs .active {
    color: #3c8527;
    background: #f8f9fc;
}

/* 功能区 */
.ribbon {
    flex: none;
    display: flex;
    border-bottom: 1px solid #b9c4c6;
}
.group {
    flex: none;
    display: flex;
    flex-direction: column;
    padding-top: 1px;
    border-right: 1px solid #c4c7c9;
}
.group:last-child {
    flex: 1;
    border-right: 0;
}
.body {
    flex: 1;
    display: flex;
    align-items: flex-start;
}
.col {
    display: flex;
    flex-direction: column;
}
.col:first-child {
    margin-left: 7px;
}
.col:last-child {
    margin-right: 7px;
}
.col + .col {
    margin-left: 8px;
}
.cmd {
    height: 28px;
}
.cmd .icon {
    margin-right: 4px;
}
.cmd .caret {
    margin-left: 6px;
}
.big {
    flex-direction: column;
    width: 47px;
    padding-top: 5px;
}
.big svg {
    width: 32px;
    height: 32px;
    margin-bottom: 10px;
}
.big .caret {
    margin-top: 6px;
}
.regen {
    width: 57px;
    margin-right: 4px;
}
.wide {
    width: 63px;
}
.last {
    width: 68px;
}
.foot {
    justify-content: center;
    gap: 1px;
    height: 27px;
    padding-top: 2px;
}

main {
    flex: 1;
    display: flex;
    min-height: 0;
}

/* 侧栏 */
.sidebar {
    flex: none;
    width: 192px;
    border-right: 3px solid #d9dfde;
}
.side-tabs {
    display: flex;
    height: 30px;
    background: #d9dfde;
}
.side-tabs button {
    width: 58px;
    padding-left: 7px;
    gap: 3px;
    overflow: hidden;
}
.side-tabs .active {
    width: 74px;
    gap: 5px;
    background: #f8f9fc;
}
.side-tabs span {
    width: 22px;
    overflow: hidden;
    -webkit-mask-image: linear-gradient(90deg, #000 40%, transparent);
    mask-image: linear-gradient(90deg, #000 40%, transparent);
}
.side-tools {
    display: flex;
    align-items: center;
    gap: 7px;
    height: 29px;
    padding-left: 26px;
}
.side-tools h2 {
    margin-right: 2px;
    font-size: 12px;
    font-weight: 500;
    color: #333;
}
.side-tools button:last-child {
    margin-left: 6px;
}
.side-search {
    display: flex;
    align-items: center;
    gap: 4px;
    height: 28px;
    padding-left: 10px;
}
.search {
    position: relative;
    width: 111px;
}
.search input {
    display: block;
    width: 100%;
    height: 28px;
    padding: 0 20px 0 4px;
    border: 1px solid #a5b0b2;
    background: #fff;
    font: inherit;
    outline: none;
}
.search button {
    position: absolute;
    right: 6px;
    top: 10px;
}
.search svg {
    width: 8px;
    height: 8px;
}
.side-search > button {
    margin: 0 5px 0 2px;
}
.plus {
    width: 12px;
    height: 12px;
}
.tree {
    padding-top: 5px;
    list-style: none;
    color: #4a4f50;
}
.tree li {
    position: relative;
    display: flex;
    align-items: center;
    gap: 5px;
    height: 22px;
    padding-left: 29px;
}
.tree .root {
    padding-left: 9px;
}
.tree .fold::before {
    content: "";
    position: absolute;
    left: 15px;
    border: 4px solid transparent;
    border-left: 7px solid #808486;
    border-right: 0;
}
.tree .hidden-item {
    height: 30px;
    margin: 6px 5px 0 6px;
    padding: 4px 0 0 23px;
    border-top: 2px solid #5cc03b;
    background: #e3e3e3;
    color: #84888a;
}
.hidden-item .icon {
    opacity: .6;
}
.hidden-item i {
    width: 4px;
    height: 5px;
    margin: 0 -4px 8px 0;
    background: #777;
}

/* 图形区 */
.viewport {
    position: relative;
    flex: 1;
    background: linear-gradient(#9f9c8f, #c0bdb0 50%, #e2e0d4);
}
.model {
    display: block;
    width: 100%;
    height: 100%;
}
.face {
    fill: #d5e4ff;
    stroke: #000;
}
.edge {
    fill: none;
    stroke: #000;
}
.picked {
    fill: none;
    stroke: #3a32ff;
    stroke-dasharray: 14 8;
}
.view-tools {
    position: absolute;
    top: 8px;
    right: 54px;
    display: flex;
    gap: 2px;
    padding: 3px 2px;
    border: 1px solid #c3c4c0;
    background: #f8f9fc;
}
.view-tools button {
    position: relative;
    justify-content: center;
    width: 24px;
    height: 22px;
}
.view-tools .on {
    border: 1px solid #a0a4a5;
    background: #dadcdf;
}
.view-tools .more::after {
    content: "";
    position: absolute;
    right: 0;
    bottom: 1px;
    border-left: 4px solid transparent;
    border-bottom: 4px solid #666;
}
.mode {
    position: absolute;
    left: 8px;
    bottom: 92px;
    font: 8px/16px "Noto Sans CJK SC", sans-serif;
    color: #85837a;
}
.logo {
    position: absolute;
    right: 22px;
    bottom: 2px;
}
.logo .name {
    font: italic 400 41px/44px "Noto Sans CJK SC", sans-serif;
    color: #000;
}
.logo b {
    font-weight: 400;
    color: #ff6a36;
}
.logo .site {
    padding-left: 2px;
    font: italic 18px/18px "Liberation Sans", sans-serif;
    color: #9b9b97;
}
.flame {
    position: absolute;
    left: 66px;
    top: -16px;
    width: 18px;
    height: 42px;
}

.status {
    flex: none;
    height: 5px;
    border-top: 1px solid #b3bfc0;
}
```
